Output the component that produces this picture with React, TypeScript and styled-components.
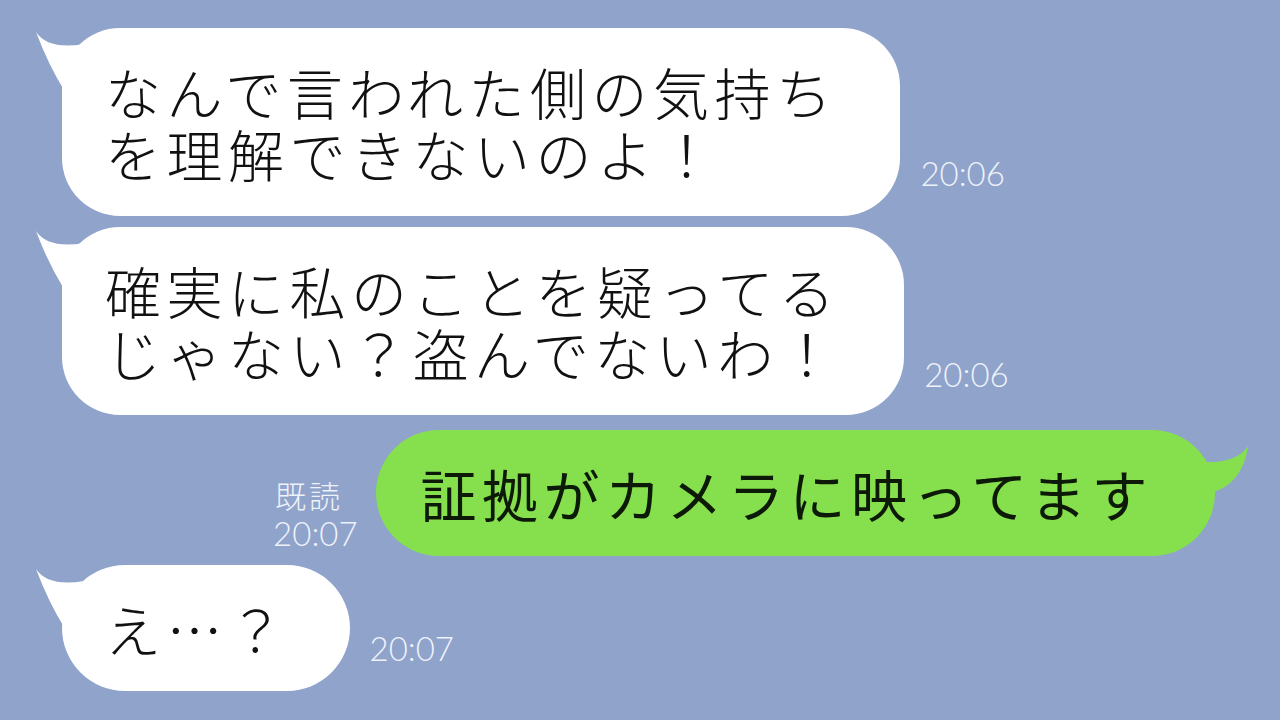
import React from "react";
import styled, { createGlobalStyle } from "styled-components";

const Global = createGlobalStyle`
  html, body { margin: 0; padding: 0; }
  body {
    background: #8fa3cb;
    width: 1280px;
    height: 720px;
    overflow: hidden;
    font-family: "Noto Sans CJK JP", "Noto Sans", sans-serif;
  }
`;

const Screen = styled.div`
  width: 1280px;
  height: 720px;
  background: #8fa3cb;
  display: flex;
  flex-direction: column;
  padding-top: 28px;
  box-sizing: border-box;
`;

const Row = styled.div<{ $side: "left" | "right"; $gap: number }>`
  display: flex;
  align-items: flex-end;
  justify-content: ${(p) => (p.$side === "left" ? "flex-start" : "flex-end")};
  padding: ${(p) => (p.$side === "left" ? "0 0 0 62px" : "0 65px 0 0")};
  margin-top: ${(p) => p.$gap}px;
  gap: ${(p) => (p.$side === "left" ? 20 : 18)}px;
`;

const Bubble = styled.div<{ $green?: boolean; $pr: number; $pl: number; $radius: number }>`
  position: relative;
  background: ${(p) => (p.$green ? "#86e04d" : "#ffffff")};
  color: ${(p) => (p.$green ? "#0d1a08" : "#111111")};
  border-radius: ${(p) => p.$radius}px;
  padding: 32px ${(p) => p.$pr}px 32px ${(p) => p.$pl}px;
  font-family: "Noto Sans CJK JP", sans-serif;
  font-weight: ${(p) => (p.$green ? 400 : 300)};
  font-size: 56px;
  letter-spacing: 5.5px;
  line-height: 62px;
  white-space: nowrap;
`;

const Line = styled.div``;

const TailSvg = styled.svg<{ $side: "left" | "right" }>`
  position: absolute;
  top: 0;
  ${(p) => (p.$side === "left" ? "left: -30px;" : "right: -40px;")}
  width: 80px;
  height: 70px;
  overflow: visible;
`;

const Meta = styled.div<{ $mb: number }>`
  display: flex;
  flex-direction: column;
  align-items: flex-start;
  margin-bottom: ${(p) => p.$mb}px;
  color: #eef2fa;
`;

const Read = styled.span`
  font-family: "Noto Sans CJK JP", sans-serif;
  font-weight: 300;
  font-size: 31px;
  letter-spacing: 3px;
  line-height: 38px;
  padding-left: 2px;
`;

const Time = styled.span`
  font-family: Lato, "Noto Sans", sans-serif;
  font-weight: 300;
  font-size: 33px;
  line-height: 38px;
`;

const LeftTail = () => (
  <TailSvg $side="left" viewBox="-30 0 80 70">
    <path d="M -26 4 Q -14 22 22 16 L 44 40 L 2 62 Q -14 36 -26 4 Z" fill="#ffffff" />
  </TailSvg>
);

const RightTail = () => (
  <TailSvg $side="right" viewBox="-40 0 80 70">
    <path d="M 33 16 Q 22 34 -16 32 L -32 60 L -1 62 Q 28 52 33 16 Z" fill="#86e04d" />
  </TailSvg>
);

export default function App() {
  return (
    <>
      <Global />
      <Screen>
        <Row $side="left" $gap={0}>
          <Bubble $pl={43} $pr={63} $radius={58}>
            <LeftTail />
            <Line>なんで言われた側の気持ち</Line>
            <Line>を理解できないのよ！</Line>
          </Bubble>
          <Meta $mb={24}>
            <Time>20:06</Time>
          </Meta>
        </Row>
        <Row $side="left" $gap={11}>
          <Bubble $pl={43} $pr={64} $radius={58}>
            <LeftTail />
            <Line>確実に私のことを疑ってる</Line>
            <Line>じゃない？盗んでないわ！</Line>
          </Bubble>
          <Meta $mb={22}>
            <Time>20:06</Time>
          </Meta>
        </Row>
        <Row $side="right" $gap={15}>
          <Meta $mb={4}>
            <Read>既読</Read>
            <Time>20:07</Time>
          </Meta>
          <Bubble $green $pl={45} $pr={62} $radius={63}>
            <RightTail />
            <Line>証拠がカメラに映ってます</Line>
          </Bubble>
        </Row>
        <Row $side="left" $gap={9}>
          <Bubble $pl={43} $pr={60} $radius={63}>
            <LeftTail />
            <Line>え…？</Line>
          </Bubble>
          <Meta $mb={24}>
            <Time>20:07</Time>
          </Meta>
        </Row>
      </Screen>
    </>
  );
}
